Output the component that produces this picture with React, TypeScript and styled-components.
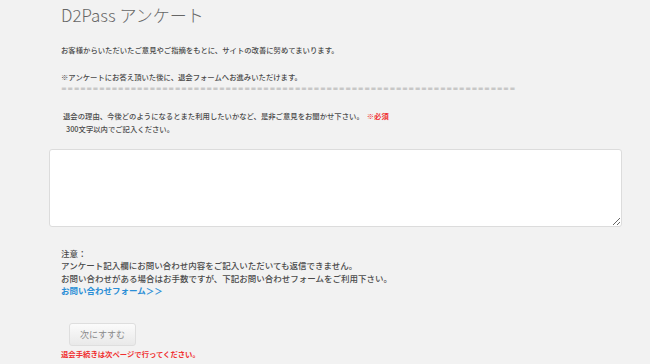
import React from "react";
import styled, { createGlobalStyle } from "styled-components";

const Global = createGlobalStyle`
  html, body { margin: 0; padding: 0; background: #f2f2f2; }
  body { font-family: "Noto Sans CJK JP", "Noto Sans", sans-serif; color: #555; }
`;

const Page = styled.div`
  padding: 0 28px 0 49px;
  display: flex;
  flex-direction: column;
`;

const Block = styled.div<{ $mt?: number; $pl?: number }>`
  margin-top: ${(p) => p.$mt ?? 0}px;
  padding-left: ${(p) => p.$pl ?? 12}px;
`;

const Title = styled.h1`
  margin: 0;
  padding-left: 12px;
  font-size: 17px;
  line-height: 30px;
  font-weight: 300;
  color: #666;
`;

const Line = styled.div<{ $size?: number; $lh?: number; $weight?: number; $color?: string; $pl?: number }>`
  font-size: ${(p) => p.$size ?? 7.35}px;
  line-height: ${(p) => p.$lh ?? 13}px;
  font-weight: ${(p) => p.$weight ?? 500};
  color: ${(p) => p.$color ?? "#4a4a4a"};
  padding-left: ${(p) => p.$pl ?? 0}px;
  white-space: nowrap;
`;

const Equals = styled.div`
  font-family: "DejaVu Sans", sans-serif;
  font-size: 7px;
  line-height: 13px;
  color: #aaa;
  letter-spacing: 0.45px;
  white-space: nowrap;
  overflow: hidden;
  width: 456px;
`;

const Required = styled.span`
  color: #f03030;
  font-weight: 700;
  margin-left: 3px;
`;

const TextArea = styled.textarea`
  display: block;
  box-sizing: border-box;
  width: 573px;
  height: 78px;
  margin: 14.5px 0 0 0;
  border: 1px solid #dcdcdc;
  border-radius: 3px;
  background: #fff;
  outline: none;
  font-family: inherit;
`;

const Link = styled.a`
  color: #2a8ed6;
  font-weight: 700;
  text-decoration: none;
`;

const Button = styled.button`
  box-sizing: border-box;
  width: 67px;
  height: 23px;
  margin: 27px 0 0 20px;
  border: 1px solid #dedede;
  border-radius: 3px;
  background: linear-gradient(#fbfbfb, #e9e9e9);
  color: #8a8a8a;
  font-family: inherit;
  font-size: 9px;
  padding: 0;
  align-self: flex-start;
`;

export default function App() {
  return (
    <>
      <Global />
      <Page>
        <Title>D2Pass アンケート</Title>
        <Block $mt={12.5}>
          <Line>お客様からいただいたご意見やご指摘をもとに、サイトの改善に努めてまいります。</Line>
        </Block>
        <Block $mt={14}>
          <Line>※アンケートにお答え頂いた後に、退会フォームへお進みいただけます。</Line>
          <Equals>{"=".repeat(72)}</Equals>
        </Block>
        <Block $mt={13} $pl={14}>
          <Line>
            退会の理由、今後どのようになるとまた利用したいかなど、是非ご意見をお聞かせ下さい。
            <Required>※必須</Required>
          </Line>
          <Line $pl={3}>300文字以内でご記入ください。</Line>
        </Block>
        <TextArea />
        <Block $mt={20}>
          <Line $size={8.5} $lh={12.3}>注意：</Line>
          <Line $size={8.5} $lh={12.3}>アンケート記入欄にお問い合わせ内容をご記入いただいても返信できません。</Line>
          <Line $size={8.5} $lh={12.3}>お問い合わせがある場合はお手数ですが、下記お問い合わせフォームをご利用下さい。</Line>
          <Line $size={8.5} $lh={12.3}>
            <Link href="#">お問い合わせフォーム＞＞</Link>
          </Line>
        </Block>
        <Button>次にすすむ</Button>
        <Block $mt={2}>
          <Line $lh={12} $weight={700} $color="#f03030">退会手続きは次ページで行ってください。</Line>
        </Block>
      </Page>
    </>
  );
}
